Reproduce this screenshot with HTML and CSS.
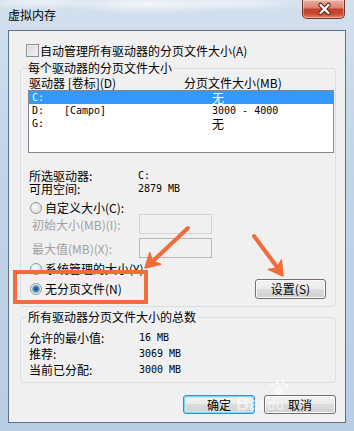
FILE: index.html
```html
<!DOCTYPE html>
<html>
<head>
    <title>虚拟内存</title>
    <link rel="stylesheet" href="styles.css">
</head>
<body>
    <div class="window">
        <div class="titlebar">
            <span class="title">虚拟内存</span>
            <span class="close">
                <svg width="43" height="18" viewBox="0 0 43 18">
                    <path d="M17.5 5 L25.5 13 M25.5 5 L17.5 13" stroke="#5a1d14" stroke-width="4.5" stroke-linecap="round"/>
                    <path d="M17.5 5 L25.5 13 M25.5 5 L17.5 13" stroke="#fff" stroke-width="2.4" stroke-linecap="round"/>
                </svg>
            </span>
        </div>

        <div class="client">
            <div class="auto-row">
                <span class="checkbox"></span>
                <span>自动管理所有驱动器的分页文件大小(A)</span>
            </div>

            <fieldset class="group">
                <legend>每个驱动器的分页文件大小</legend>
                <div class="cols">
                    <span>驱动器 [卷标](D)</span>
                    <span>分页文件大小(MB)</span>
                </div>
                <div class="listbox">
                    <div class="item selected"><span class="mono">C:</span><span></span><span>无</span></div>
                    <div class="item"><span class="mono">D:</span><span class="mono">[Campo]</span><span class="mono">3000 - 4000</span></div>
                    <div class="item"><span class="mono">G:</span><span></span><span>无</span></div>
                </div>

                <div class="info">
                    <span>所选驱动器:</span><span class="mono">C:</span>
                    <span>可用空间:</span><span class="mono">2879 MB</span>
                </div>

                <div class="radio-row first">
                    <span class="radio"></span>
                    <span>自定义大小(C):</span>
                </div>
                <div class="size-row">
                    <span>初始大小(MB)(I):</span>
                    <span class="field light"></span>
                </div>
                <div class="size-row second">
                    <span>最大值(MB)(X):</span>
                    <span class="field"></span>
                </div>
                <div class="radio-row">
                    <span class="radio"></span>
                    <span>系统管理的大小(Y)</span>
                </div>
                <div class="none-row">
                    <div class="radio-pair">
                        <span class="radio checked"></span>
                        <span>无分页文件(N)</span>
                    </div>
                    <button class="btn set">设置(S)</button>
                </div>
            </fieldset>

            <fieldset class="group totals">
                <legend>所有驱动器分页文件大小的总数</legend>
                <div class="totals-grid">
                    <span>允许的最小值:</span><span class="mono">16 MB</span>
                    <span>推荐:</span><span class="mono">3069 MB</span>
                    <span>当前已分配:</span><span class="mono">3000 MB</span>
                </div>
            </fieldset>

            <div class="actions">
                <button class="btn default">确定</button>
                <button class="btn">取消</button>
            </div>
        </div>

        <!-- annotation marks drawn over the dialog -->
        <div class="highlight"></div>
        <svg class="marks" width="354" height="431" viewBox="0 0 354 431">
            <g fill="#fff" opacity="0.55">
                <text x="236" y="410" font-family="Liberation Sans, sans-serif" font-weight="bold" font-size="18">Bai</text>
                <ellipse cx="279" cy="391" rx="5" ry="4"/>
                <circle cx="272" cy="385" r="2"/>
                <circle cx="277" cy="382" r="2"/>
                <circle cx="283" cy="382" r="2"/>
                <circle cx="287" cy="386" r="2"/>
                <text x="267" y="410" font-family="Liberation Sans, sans-serif" font-weight="bold" font-size="14">du</text>
            </g>
            <g fill="#f26b3a" stroke="#f26b3a" stroke-linecap="round">
                <line x1="188" y1="228" x2="153" y2="261" stroke-width="4"/>
                <polygon points="145,268 160.6,264.3 152.3,261.2 149.8,252.7" stroke-width="1.5" stroke-linejoin="round"/>
                <line x1="254" y1="236" x2="277" y2="267" stroke-width="4"/>
                <polygon points="283,276 268.3,269.4 277.1,267.9 281.3,260" stroke-width="1.5" stroke-linejoin="round"/>
            </g>
        </svg>
    </div>
</body>
</html>
```

FILE: styles.css
```css
* {
    box-sizing: border-box;
}

body {
    margin: 0;
    width: 354px;
    height: 431px;
    overflow: hidden;
    font-family: "Noto Sans CJK SC", sans-serif;
    font-size: 12px;
    color: #000;
}

.window {
    position: relative;
    height: 431px;
    padding: 0 8px;
    background:
        radial-gradient(ellipse 90px 10px at 150px 4px, rgba(255, 255, 255, 0.75), transparent),
        radial-gradient(ellipse 60px 8px at 40px 2px, rgba(255, 255, 255, 0.6), transparent),
        radial-gradient(ellipse 70px 8px at 240px 3px, rgba(255, 255, 255, 0.55), transparent),
        linear-gradient(#d3e0ee, #c2d4e8 40%, #b9cde4);
}

.titlebar {
    display: flex;
    align-items: flex-start;
    height: 30px;
}

.title {
    margin-top: 8px;
    line-height: 14px;
    font-size: 12px;
}

.close {
    margin-left: auto;
    margin-right: 1px;
    width: 43px;
    height: 19px;
    border: 1px solid #7c3328;
    border-top: none;
    border-radius: 0 0 5px 5px;
    background: linear-gradient(#eab0a2, #dc8573 42%, #c3402e 52%, #c9482f 78%, #e58c6d);
    box-shadow: inset 0 0 0 1px rgba(255, 255, 255, 0.35);
}

.close svg {
    display: block;
}

.client {
    height: 393px;
    border: 1px solid #5f7188;
    background: #f0f0f0;
}

.auto-row {
    display: flex;
    align-items: center;
    gap: 1px;
    height: 13px;
    margin: 13px 0 0 17px;
    line-height: 13px;
}

.checkbox {
    width: 13px;
    height: 13px;
    border: 1px solid #8e8f8f;
    background: linear-gradient(135deg, #d4d4d4, #f7f7f7);
    box-shadow: inset 0 0 0 1px #ececec;
}

.mono {
    font-family: "DejaVu Sans Mono", monospace;
    font-size: 10px;
}

.group {
    margin: 5px 9px 0 11px;
    padding: 0 0 7px 5px;
    min-width: 0;
    border: 1px solid #d5dfe5;
    border-radius: 3px;
}

.group legend {
    padding: 0 2px;
    line-height: 12px;
}

.cols {
    display: grid;
    grid-template-columns: 155px auto;
    margin: 3px 0 0 3px;
    line-height: 12px;
}

.listbox {
    width: 306px;
    height: 63px;
    margin: 1px 0 0 2px;
    border: 1px solid #828790;
    background: #fff;
}

.item {
    display: grid;
    grid-template-columns: 32px 148px auto;
    height: 13px;
    padding-left: 3px;
    line-height: 13px;
}

.item.selected {
    background: #3399ff;
    color: #fff;
}

.info {
    display: grid;
    grid-template-columns: 109px auto;
    margin: 16px 0 0 3px;
    line-height: 13px;
}

.radio-row,
.radio-pair {
    display: flex;
    align-items: center;
    gap: 3px;
    height: 12px;
    line-height: 12px;
}

.radio-row {
    margin: 5px 0 0 4px;
}

.radio-row.first {
    margin-top: 7px;
}

.radio {
    width: 12px;
    height: 12px;
    border-radius: 50%;
    border: 1px solid #979797;
    background: radial-gradient(circle at 35% 35%, #fdfdfd, #d2d2d2);
}

.radio.checked {
    background: radial-gradient(circle, #1f4f7a 0, #2f6fa8 2px, #76b6e6 3.6px, #ededed 4.4px, #d2d2d2 100%);
}

.size-row {
    display: grid;
    grid-template-columns: 107px 73px;
    align-items: center;
    height: 20px;
    margin-left: 6px;
    color: #a0a0a0;
}

.size-row.second {
    margin-top: 4px;
}

.field {
    height: 20px;
    border: 1px solid #b8b8b8;
    background: #f0f0f0;
}

.field.light {
    border-color: #d3d3d3;
}

.none-row {
    display: flex;
    justify-content: space-between;
    align-items: center;
    height: 20px;
    margin: 4px 9px 0 4px;
}

.btn {
    width: 72px;
    height: 19px;
    padding: 0;
    border: 1px solid #707070;
    border-radius: 3px;
    background: linear-gradient(#f2f2f2, #ebebeb 49%, #dddddd 50%, #cfcfcf);
    box-shadow: inset 0 0 0 1px #fbfbfb;
    font-family: "Noto Sans CJK SC", sans-serif;
    font-size: 12px;
    line-height: 16px;
    color: #000;
}

.btn.set {
    width: 71px;
    height: 20px;
}

.btn.default {
    border-color: #3c8fc4;
    box-shadow: inset 0 0 0 1px #7fd5f7, inset 0 0 0 2px #c4ecfb;
}

.totals {
    margin-top: 4px;
    padding-bottom: 4px;
}

.totals-grid {
    display: grid;
    grid-template-columns: 110px auto;
    margin: 7px 0 0 3px;
    line-height: 16px;
}

.actions {
    display: flex;
    justify-content: flex-end;
    gap: 9px;
    margin-top: 12px;
    padding-right: 9px;
}

.highlight {
    position: absolute;
    left: 13px;
    top: 270px;
    width: 135px;
    height: 34px;
    border: 4px solid #f26b3a;
}

.marks {
    position: absolute;
    left: 0;
    top: 0;
    pointer-events: none;
}
```
